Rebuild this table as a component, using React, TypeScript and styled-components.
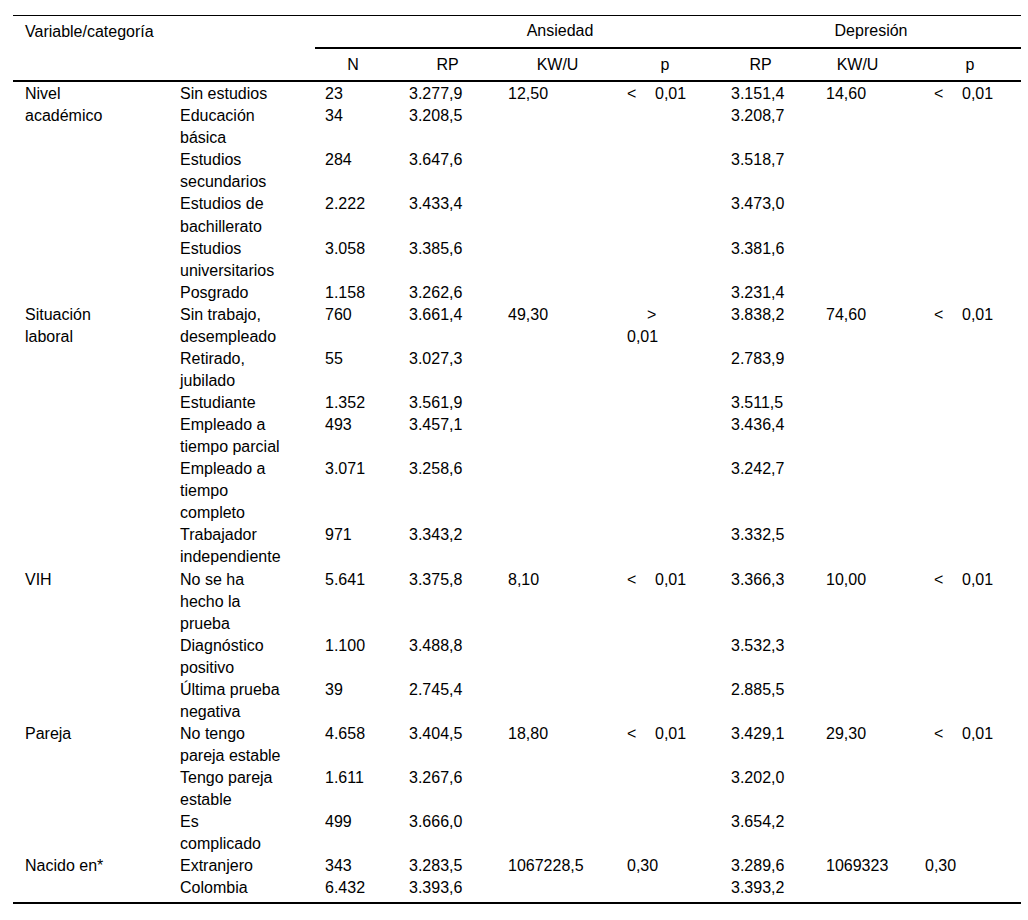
import React from 'react'
import { styled, createGlobalStyle } from 'styled-components'

type PValue = { sign?: '<' | '>', value: string, wrapped?: boolean }

type Row = {
  cat: string,
  n: string,
  rp: string,
  rp2: string,
}

type Group = {
  label: string,
  kw: string,
  p: PValue,
  kw2: string,
  p2: PValue,
  rows: Row[]
}

const groups: Group[] = [
  {
    label: 'Nivel académico', kw: '12,50', p: { sign: '<', value: '0,01' }, kw2: '14,60', p2: { sign: '<', value: '0,01' },
    rows: [
      { cat: 'Sin estudios', n: '23', rp: '3.277,9', rp2: '3.151,4' },
      { cat: 'Educación básica', n: '34', rp: '3.208,5', rp2: '3.208,7' },
      { cat: 'Estudios secundarios', n: '284', rp: '3.647,6', rp2: '3.518,7' },
      { cat: 'Estudios de bachillerato', n: '2.222', rp: '3.433,4', rp2: '3.473,0' },
      { cat: 'Estudios universitarios', n: '3.058', rp: '3.385,6', rp2: '3.381,6' },
      { cat: 'Posgrado', n: '1.158', rp: '3.262,6', rp2: '3.231,4' },
    ]
  },
  {
    label: 'Situación laboral', kw: '49,30', p: { sign: '>', value: '0,01', wrapped: true }, kw2: '74,60', p2: { sign: '<', value: '0,01' },
    rows: [
      { cat: 'Sin trabajo, desempleado', n: '760', rp: '3.661,4', rp2: '3.838,2' },
      { cat: 'Retirado, jubilado', n: '55', rp: '3.027,3', rp2: '2.783,9' },
      { cat: 'Estudiante', n: '1.352', rp: '3.561,9', rp2: '3.511,5' },
      { cat: 'Empleado a tiempo parcial', n: '493', rp: '3.457,1', rp2: '3.436,4' },
      { cat: 'Empleado a tiempo completo', n: '3.071', rp: '3.258,6', rp2: '3.242,7' },
      { cat: 'Trabajador independiente', n: '971', rp: '3.343,2', rp2: '3.332,5' },
    ]
  },
  {
    label: 'VIH', kw: '8,10', p: { sign: '<', value: '0,01' }, kw2: '10,00', p2: { sign: '<', value: '0,01' },
    rows: [
      { cat: 'No se ha hecho la prueba', n: '5.641', rp: '3.375,8', rp2: '3.366,3' },
      { cat: 'Diagnóstico positivo', n: '1.100', rp: '3.488,8', rp2: '3.532,3' },
      { cat: 'Última prueba negativa', n: '39', rp: '2.745,4', rp2: '2.885,5' },
    ]
  },
  {
    label: 'Pareja', kw: '18,80', p: { sign: '<', value: '0,01' }, kw2: '29,30', p2: { sign: '<', value: '0,01' },
    rows: [
      { cat: 'No tengo pareja estable', n: '4.658', rp: '3.404,5', rp2: '3.429,1' },
      { cat: 'Tengo pareja estable', n: '1.611', rp: '3.267,6', rp2: '3.202,0' },
      { cat: 'Es complicado', n: '499', rp: '3.666,0', rp2: '3.654,2' },
    ]
  },
  {
    label: 'Nacido en*', kw: '1067228,5', p: { value: '0,30' }, kw2: '1069323', p2: { value: '0,30' },
    rows: [
      { cat: 'Extranjero', n: '343', rp: '3.283,5', rp2: '3.289,6' },
      { cat: 'Colombia', n: '6.432', rp: '3.393,6', rp2: '3.393,2' },
    ]
  },
]

const colWidths = [157, 145, 84, 99, 119, 104, 95, 99, 106]

// column headings of the second header row, with a small nudge to sit where the source put them
const subHeads = [
  { label: 'N', shift: -4 },
  { label: 'RP', shift: -1 },
  { label: 'KW/U', shift: 0 },
  { label: 'p', shift: -4 },
  { label: 'RP', shift: -8 },
  { label: 'KW/U', shift: -8 },
  { label: 'p', shift: 2 },
]

const GlobalStyle = createGlobalStyle`
body {
  margin: 0;
  background: #fff;
  font-family: "Liberation Sans", Arial, sans-serif;
  color: #000;
}
`

const Page = styled.div`
padding: 15px 7px 0 13px;
`

const StyledTable = styled.table`
width: 1008px;
table-layout: fixed;
border-collapse: collapse;
font-size: 16px;
line-height: 22.06px;
border-top: 1px solid #000;
border-bottom: 2px solid #000;
`

const Th = styled.th<{ $align?: string, $ruleTop?: boolean, $ruleBottom?: boolean, $pl?: number, $shift?: number, $pad?: string }>`
font-weight: 400;
padding: ${({ $pad }) => $pad ?? '4px 0 5px 0'};
padding-left: ${({ $pl, $shift = 0 }) => ($pl ?? 10) + Math.max($shift, 0) * 2}px;
padding-right: ${({ $shift = 0 }) => 10 + Math.max(-$shift, 0) * 2}px;
text-align: ${({ $align }) => $align ?? 'center'};
border-top: ${({ $ruleTop }) => $ruleTop ? '2px solid #000' : 'none'};
border-bottom: ${({ $ruleBottom }) => $ruleBottom ? '2px solid #000' : 'none'};
`

const Td = styled.td<{ $pr?: number, $first?: boolean, $last?: boolean }>`
padding: ${({ $first }) => $first ? 1 : 0}px ${({ $pr }) => $pr ?? 10}px ${({ $last }) => $last ? 3 : 0}px 10px;
vertical-align: top;
text-align: left;
`

const VarTd = styled(Td)`
padding-left: 12px;
`

const PLine = styled.span<{ $indent: number }>`
display: inline-flex;
margin-left: ${({ $indent }) => $indent}px;
`

const Sign = styled.span`
width: 28px;
`

const PWrapped = styled.span`
display: block;
`

const WrappedSign = styled.span`
display: block;
padding-left: 20px;
`

const PCell = ({ p, indent }: { p: PValue, indent: number }) => {
  if (!p.sign) return <>{p.value}</>
  if (p.wrapped) {
    return (
      <PWrapped>
        <WrappedSign>{p.sign}</WrappedSign>
        {p.value}
      </PWrapped>
    )
  }
  return (
    <PLine $indent={indent}>
      <Sign>{p.sign}</Sign>
      {p.value}
    </PLine>
  )
}

export default function App() {
  const lastGroup = groups.length - 1
  return (
    <Page>
      <GlobalStyle />
      <StyledTable>
        <colgroup>
          {colWidths.map((w, i) => <col key={i} style={{ width: w }} />)}
        </colgroup>
        <thead>
          <tr>
            <Th colSpan={2} $align="left" $pl={12}>Variable/categoría</Th>
            <Th></Th>
            <Th colSpan={3}>Ansiedad</Th>
            <Th colSpan={3}>Depresión</Th>
          </tr>
          <tr>
            <Th colSpan={2} $ruleBottom $pad="5px 0 4px 0"></Th>
            {subHeads.map((h, i) => (
              <Th key={i} $ruleTop $ruleBottom $shift={h.shift} $pad="5px 0 4px 0">{h.label}</Th>
            ))}
          </tr>
        </thead>
        <tbody>
          {groups.map((g, gi) =>
            g.rows.map((r, ri) => {
              const first = gi === 0 && ri === 0
              const last = gi === lastGroup && ri === g.rows.length - 1
              return (
                <tr key={`${gi}-${ri}`}>
                  {ri === 0 && <VarTd rowSpan={g.rows.length} $pr={45} $first={first}>{g.label}</VarTd>}
                  <Td $pr={31} $first={first} $last={last}>{r.cat}</Td>
                  <Td $first={first} $last={last}>{r.n}</Td>
                  <Td $first={first} $last={last}>{r.rp}</Td>
                  <Td $first={first} $last={last}>{ri === 0 ? g.kw : ''}</Td>
                  <Td $first={first} $last={last}>{ri === 0 && <PCell p={g.p} indent={0} />}</Td>
                  <Td $first={first} $last={last}>{r.rp2}</Td>
                  <Td $first={first} $last={last}>{ri === 0 ? g.kw2 : ''}</Td>
                  <Td $first={first} $last={last}>{ri === 0 && <PCell p={g.p2} indent={9} />}</Td>
                </tr>
              )
            })
          )}
        </tbody>
      </StyledTable>
    </Page>
  )
}
